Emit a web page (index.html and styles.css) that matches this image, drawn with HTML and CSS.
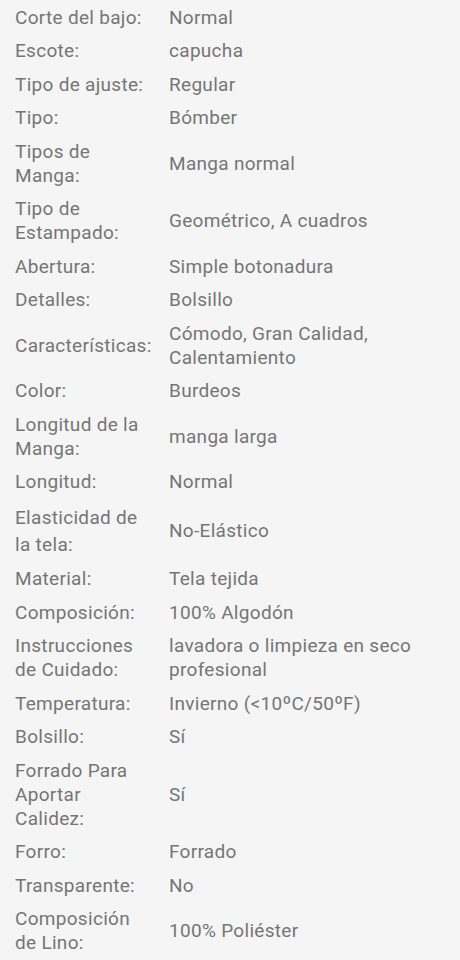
FILE: index.html
```html
<!DOCTYPE html>
<html lang="es">
<head>
    <meta charset="UTF-8">
    <meta name="viewport" content="width=device-width, initial-scale=1.0">
    <title>Especificaciones</title>
    <link rel="stylesheet" href="styles.css">
</head>
<body>

    <div class="specs">
        <div class="spec-row"><div class="spec-label">Corte del bajo:</div><div class="spec-value">Normal</div></div>
        <div class="spec-row"><div class="spec-label">Escote:</div><div class="spec-value">capucha</div></div>
        <div class="spec-row"><div class="spec-label">Tipo de ajuste:</div><div class="spec-value">Regular</div></div>
        <div class="spec-row"><div class="spec-label">Tipo:</div><div class="spec-value">Bómber</div></div>
        <div class="spec-row"><div class="spec-label">Tipos de Manga:</div><div class="spec-value">Manga normal</div></div>
        <div class="spec-row"><div class="spec-label">Tipo de Estampado:</div><div class="spec-value">Geométrico, A cuadros</div></div>
        <div class="spec-row"><div class="spec-label">Abertura:</div><div class="spec-value">Simple botonadura</div></div>
        <div class="spec-row"><div class="spec-label">Detalles:</div><div class="spec-value">Bolsillo</div></div>
        <div class="spec-row"><div class="spec-label">Características:</div><div class="spec-value">Cómodo, Gran Calidad, Calentamiento</div></div>
        <div class="spec-row"><div class="spec-label">Color:</div><div class="spec-value">Burdeos</div></div>
        <div class="spec-row"><div class="spec-label">Longitud de la Manga:</div><div class="spec-value">manga larga</div></div>
        <div class="spec-row"><div class="spec-label">Longitud:</div><div class="spec-value">Normal</div></div>
        <div class="spec-row"><div class="spec-label spec-label-loose">Elasticidad de la tela:</div><div class="spec-value">No-Elástico</div></div>
        <div class="spec-row"><div class="spec-label">Material:</div><div class="spec-value">Tela tejida</div></div>
        <div class="spec-row"><div class="spec-label">Composición:</div><div class="spec-value">100% Algodón</div></div>
        <div class="spec-row"><div class="spec-label">Instrucciones de Cuidado:</div><div class="spec-value">lavadora o limpieza en seco profesional</div></div>
        <div class="spec-row"><div class="spec-label">Temperatura:</div><div class="spec-value">Invierno (&lt;10ºC/50ºF)</div></div>
        <div class="spec-row"><div class="spec-label">Bolsillo:</div><div class="spec-value">Sí</div></div>
        <div class="spec-row"><div class="spec-label">Forrado Para Aportar Calidez:</div><div class="spec-value">Sí</div></div>
        <div class="spec-row"><div class="spec-label">Forro:</div><div class="spec-value">Forrado</div></div>
        <div class="spec-row"><div class="spec-label">Transparente:</div><div class="spec-value">No</div></div>
        <div class="spec-row"><div class="spec-label">Composición de Lino:</div><div class="spec-value">100% Poliéster</div></div>
    </div>

</body>
</html>
```

FILE: styles.css
```css
body {
    margin: 0;
    background-color: #f5f5f5;
    font-family: Roboto, "Noto Sans", sans-serif;
    font-size: 19px;
    line-height: 24px;
    letter-spacing: 0.3px;
    color: #757575;
}
.specs {
    padding: 1px 15px 0 15px;
}
.spec-row {
    display: flex;
    align-items: center;
    gap: 22px;
    padding: 4.75px 0;
}
.spec-label {
    flex: 0 0 132px;
    min-width: 0;
}
.spec-label-loose {
    line-height: 27px;
}
.spec-value {
    flex: 1;
}
```
